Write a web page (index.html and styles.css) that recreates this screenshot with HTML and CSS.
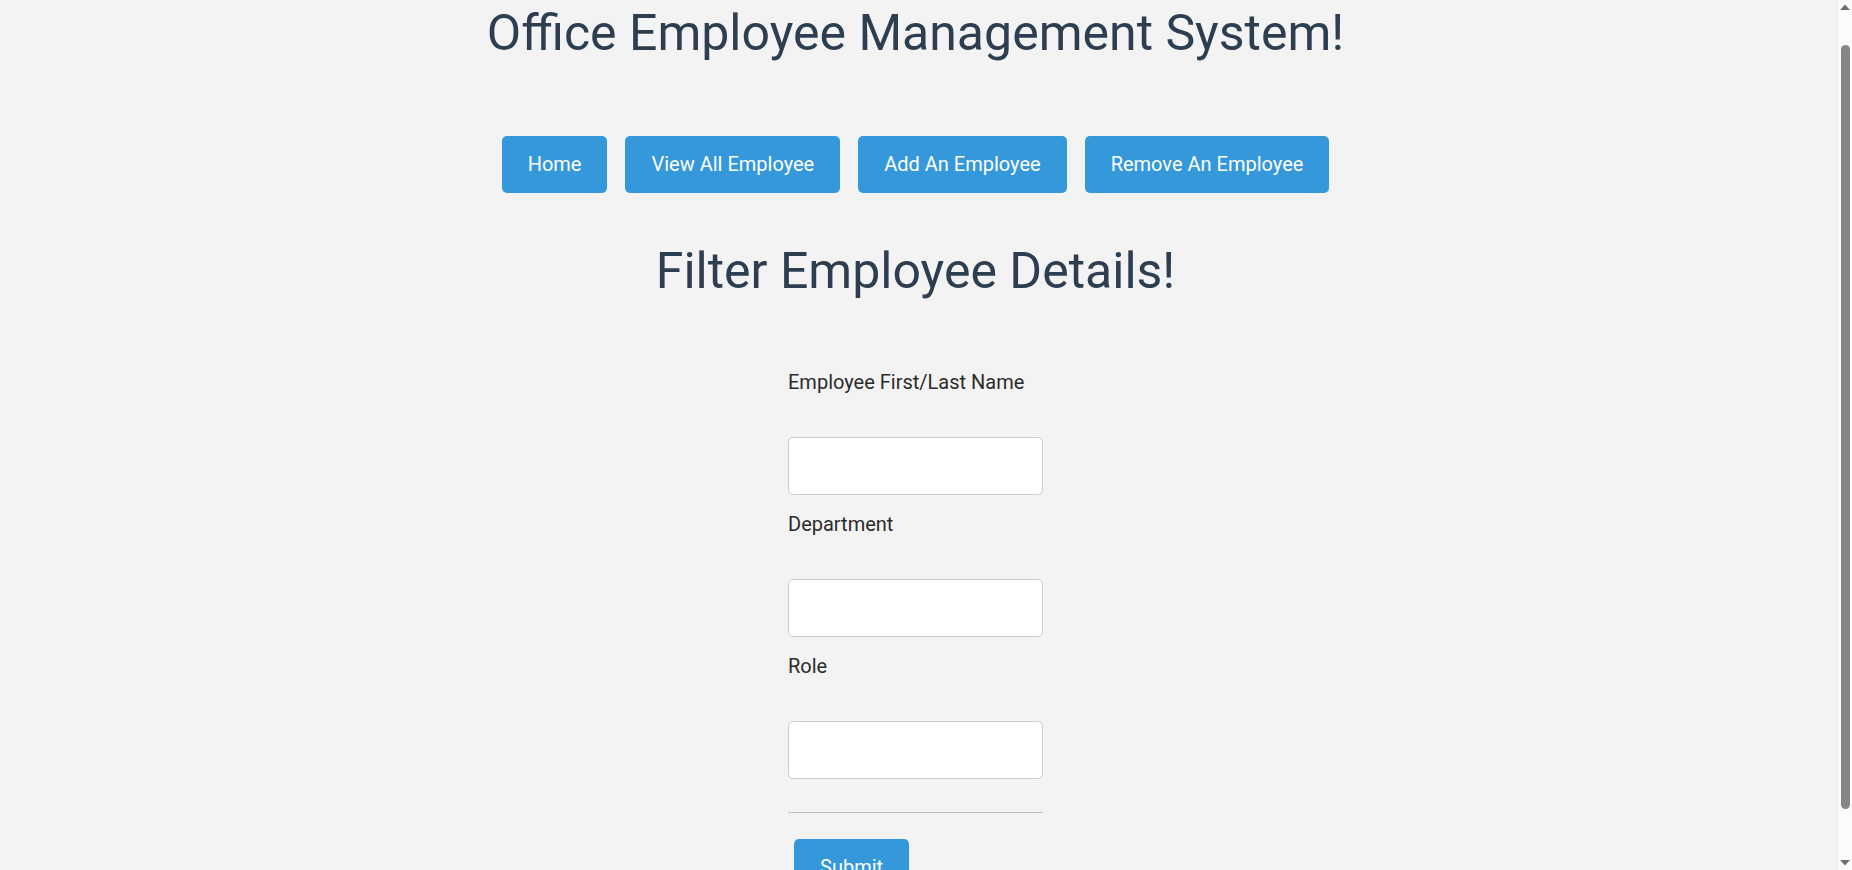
FILE: index.html
```html
<!DOCTYPE html>
<html lang="en">
<head>
<meta charset="utf-8">
<title>Office Employee Management System</title>
<link rel="stylesheet" href="styles.css">
</head>
<body>
<div class="page">
  <h1 class="title">Office Employee Management System!</h1>
  <nav class="nav">
    <button class="btn">Home</button>
    <button class="btn">View All Employee</button>
    <button class="btn">Add An Employee</button>
    <button class="btn">Remove An Employee</button>
  </nav>
  <h2 class="subtitle">Filter Employee Details!</h2>
  <form class="form">
    <label class="label" for="name">Employee First/Last Name</label>
    <input class="input" id="name" type="text">
    <label class="label" for="dept">Department</label>
    <input class="input" id="dept" type="text">
    <label class="label" for="role">Role</label>
    <input class="input" id="role" type="text">
    <hr class="rule">
    <button class="btn submit" type="button">Submit</button>
  </form>
</div>
<div class="scrollbar" aria-hidden="true">
  <svg class="arrow arrow-up" width="10" height="6" viewBox="0 0 10 6"><path d="M0 6 L5 0.5 L10 6 Z" fill="#6e6e6e"/></svg>
  <span class="thumb"></span>
  <svg class="arrow arrow-down" width="10" height="6" viewBox="0 0 10 6"><path d="M0 0 L5 5.5 L10 0 Z" fill="#6e6e6e"/></svg>
</div>
</body>
</html>
```

FILE: styles.css
```css
html, body {
  margin: 0;
  padding: 0;
}
body {
  background: #f3f3f3;
  font-family: Roboto, "Liberation Sans", sans-serif;
  color: #2c3e50;
}
.page {
  display: flex;
  flex-direction: column;
  align-items: center;
  padding: 4px 21px 8px 0;
}
.title, .subtitle {
  margin: 0;
  font-size: 50px;
  font-weight: 400;
  line-height: 58px;
  color: #2c3e50;
  text-align: center;
}
.nav {
  display: flex;
  gap: 18px;
  margin-top: 74px;
}
.btn {
  background: #3498db;
  color: #fff;
  border: none;
  border-radius: 5px;
  font-family: Roboto, "Liberation Sans", sans-serif;
  font-size: 20px;
  line-height: 23px;
  padding: 17px 26px;
  cursor: pointer;
}
.subtitle {
  margin-top: 49px;
}
.form {
  display: flex;
  flex-direction: column;
  align-items: flex-start;
  width: 255px;
  margin-top: 70px;
}
.label {
  display: block;
  font-size: 20px;
  line-height: 24px;
  color: #2b2b2b;
  margin-bottom: 43px;
}
.input {
  box-sizing: border-box;
  width: 255px;
  height: 58px;
  border: 1px solid #cccccc;
  border-radius: 5px;
  background: #fff;
  margin: 0 0 17px 0;
}
.rule {
  align-self: stretch;
  border: none;
  border-top: 1px solid #c0c0c0;
  margin: 16px 0 26px 0;
}
.submit {
  margin-left: 6px;
}
.scrollbar {
  position: fixed;
  top: 0;
  right: 0;
  width: 15px;
  height: 100vh;
  background: #fbfbfb;
  border-left: 1px solid #ececec;
  box-sizing: border-box;
}
.thumb {
  position: absolute;
  top: 45px;
  bottom: 61px;
  left: 3px;
  width: 9px;
  border-radius: 5px;
  background: #868686;
}
.arrow {
  position: absolute;
  left: 2px;
  display: block;
}
.arrow-up {
  top: 4px;
}
.arrow-down {
  bottom: 4px;
}
```
